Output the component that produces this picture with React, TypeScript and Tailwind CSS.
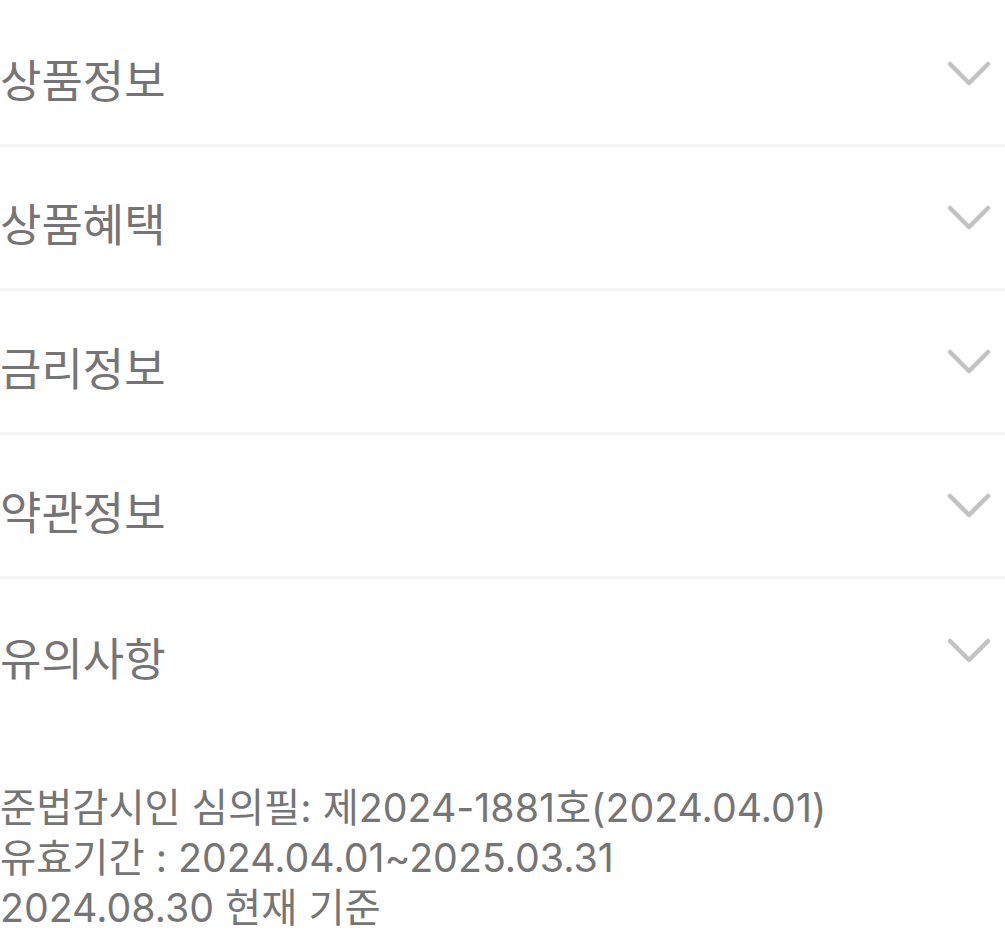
const SECTIONS = ["상품정보", "상품혜택", "금리정보", "약관정보", "유의사항"];

function Chevron() {
  return (
    <svg width="46" height="28" viewBox="0 0 46 28" fill="none" aria-hidden>
      <path d="M4 4 L23 23 L42 4" stroke="#c2c2c2" strokeWidth="4.5" strokeLinecap="round" strokeLinejoin="round" />
    </svg>
  );
}

export default function App() {
  return (
    <div className="min-h-screen bg-white font-['Inter','Noto_Sans_CJK_KR',sans-serif] text-[#757575]">
      <div className="pt-[3px]">
        {SECTIONS.map((title, i) => (
          <div
            key={title}
            className={`flex h-[144px] items-center justify-between pr-[13px] ${
              i < SECTIONS.length - 1 ? "border-b-[3px] border-[#f5f5f5]" : ""
            }`}
          >
            <span className="pt-[16px] text-[45px] leading-none">{title}</span>
            <Chevron />
          </div>
        ))}
      </div>
      <div className="mt-[60px] text-[39.3px] leading-[50px]">
        <p>준법감시인 심의필: 제2024-1881호(2024.04.01)</p>
        <p>유효기간 : 2024.04.01~2025.03.31</p>
        <p>2024.08.30 현재 기준</p>
      </div>
    </div>
  );
}
